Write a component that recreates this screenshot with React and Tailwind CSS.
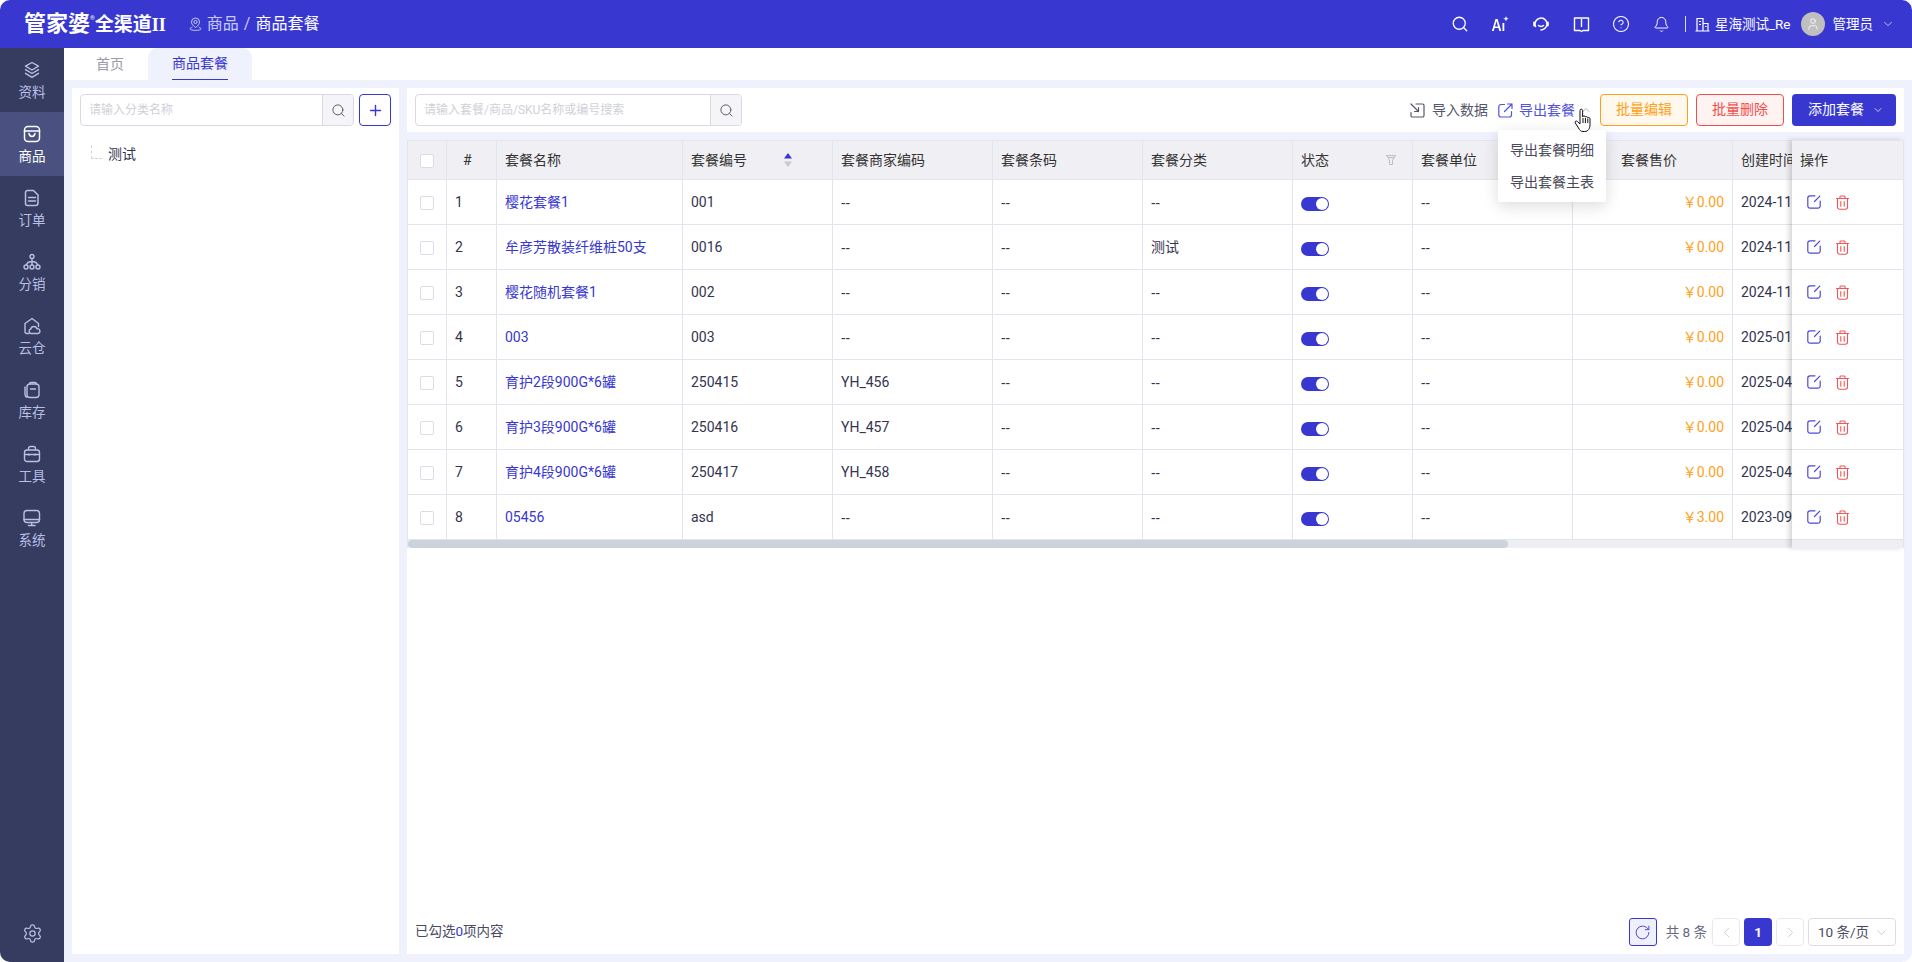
import { Search, Plus, ChevronDown, ChevronUp, ChevronLeft, ChevronRight, RotateCw, Settings, CircleHelp, Bell, User } from 'lucide-react'

const FONT = 'font-["Roboto","Noto_Sans_CJK_SC",sans-serif]'

const ROWS = [
  { name: '樱花套餐1', code: '001', merchant: '--', category: '--', price: '0.00', date: '2024-11-15 10:20' },
  { name: '牟彦芳散装纤维桩50支', code: '0016', merchant: '--', category: '测试', price: '0.00', date: '2024-11-18 09:12' },
  { name: '樱花随机套餐1', code: '002', merchant: '--', category: '--', price: '0.00', date: '2024-11-21 16:45' },
  { name: '003', code: '003', merchant: '--', category: '--', price: '0.00', date: '2025-01-06 11:30' },
  { name: '育护2段900G*6罐', code: '250415', merchant: 'YH_456', category: '--', price: '0.00', date: '2025-04-15 14:02' },
  { name: '育护3段900G*6罐', code: '250416', merchant: 'YH_457', category: '--', price: '0.00', date: '2025-04-15 14:03' },
  { name: '育护4段900G*6罐', code: '250417', merchant: 'YH_458', category: '--', price: '0.00', date: '2025-04-15 14:04' },
  { name: '05456', code: 'asd', merchant: '--', category: '--', price: '3.00', date: '2023-09-12 08:50' },
]

function StackIcon() {
  return (
    <svg className="w-[18px] h-[18px]" viewBox="0 0 18 18" fill="none" stroke="currentColor" strokeWidth="1.4" strokeLinejoin="round">
      <path d="M9 1.500l6.500 3.700L9 9 2.500 5.200z" />
      <path d="M2.500 8.700L9 12.500l6.500-3.800M2.500 12.300L9 16.300l6.500-4" strokeLinecap="round" />
    </svg>
  )
}

function BoxIcon() {
  return (
    <svg className="w-[18px] h-[18px]" viewBox="0 0 18 18" fill="none" stroke="currentColor" strokeWidth="1.5">
      <rect x="1.500" y="1.500" width="15" height="15" rx="3.500" />
      <path d="M1.500 6h15M6 8.500c.5 2.200 1.700 3 3 3s2.500-.8 3-3" strokeLinecap="round" />
    </svg>
  )
}

function OrderIcon() {
  return (
    <svg className="w-[18px] h-[18px]" viewBox="0 0 18 18" fill="none" stroke="currentColor" strokeWidth="1.5">
      <path d="M4.500 1.500h6L15 6v8a2.500 2.500 0 0 1-2.500 2.500h-8A2 2 0 0 1 2.500 14.500V3.500a2 2 0 0 1 2-2z" strokeLinejoin="round" />
      <path d="M5.500 8.500h7M5.500 12h7" strokeLinecap="round" />
    </svg>
  )
}

function TreeIcon() {
  return (
    <svg className="w-[18px] h-[18px]" viewBox="0 0 18 18" fill="none" stroke="currentColor" strokeWidth="1.400">
      <circle cx="9" cy="3.500" r="2" />
      <circle cx="3" cy="14" r="2" />
      <circle cx="9" cy="14" r="2" />
      <circle cx="15" cy="14" r="2" />
      <path d="M9 5.500V12M3.500 12c.5-2.500 2-3.500 5.500-3.500s5 1 5.500 3.500" />
    </svg>
  )
}

function CloudHouseIcon() {
  return (
    <svg className="w-[18px] h-[18px]" viewBox="0 0 18 18" fill="none" stroke="currentColor" strokeWidth="1.400">
      <path d="M6 16.500H4A2 2 0 0 1 2 14.500V6.500L9 1.500l6.500 5v3" strokeLinecap="round" strokeLinejoin="round" />
      <path d="M8 16.500a2.300 2.300 0 0 1-.2-4.500 3.200 3.200 0 0 1 6.200-.2 2.400 2.400 0 0 1 1 4.700z" strokeLinejoin="round" />
    </svg>
  )
}

function StockIcon() {
  return (
    <svg className="w-[18px] h-[18px]" viewBox="0 0 18 18" fill="none" stroke="currentColor" strokeWidth="1.400">
      <rect x="4" y="3" width="12" height="13.500" rx="3" />
      <path d="M2 6v7.500a3 3 0 0 0 2 2.800M6.500 3c0-1 .7-1.500 1.500-1.500h4c.8 0 1.500.5 1.500 1.500M7.500 8h5" strokeLinecap="round" />
    </svg>
  )
}

function ToolboxIcon() {
  return (
    <svg className="w-[18px] h-[18px]" viewBox="0 0 18 18" fill="none" stroke="currentColor" strokeWidth="1.400">
      <rect x="1.500" y="5" width="15" height="11.500" rx="2.500" />
      <path d="M5.500 5V3.500a2 2 0 0 1 2-2h3a2 2 0 0 1 2 2V5M1.500 9.500h15M6 8.500v2.200M12 8.500v2.200" />
    </svg>
  )
}

function MonitorIcon() {
  return (
    <svg className="w-[18px] h-[18px]" viewBox="0 0 18 18" fill="none" stroke="currentColor" strokeWidth="1.400">
      <rect x="1" y="1.500" width="15.500" height="12" rx="3" />
      <path d="M1 10.500h15.500M8.700 13.500v3M5.500 16.500h6.500" strokeLinecap="round" />
    </svg>
  )
}

function PinIcon() {
  return (
    <svg className="w-[13px] h-[14px]" viewBox="0 0 13 14" fill="none" stroke="#c5c8f5" strokeWidth="1">
      <path d="M6.500 10.500C4.300 8.800 2.500 7.300 2.500 5a4 4 0 0 1 8 0c0 2.300-1.800 3.800-4 5.500z" />
      <circle cx="6.500" cy="5" r="1.600" />
      <path d="M3 10.300c-1.200.4-2 1-2 1.600 0 .8 2.400 1.500 5.500 1.500S12 12.700 12 11.900c0-.6-.8-1.200-2-1.600" strokeLinecap="round" />
    </svg>
  )
}

function AiIcon() {
  return (
    <svg className="w-[18px] h-[18px]" viewBox="0 0 18 18" fill="currentColor">
      <path d="M4.500 4h2.100l3.700 12H8.300l-.8-2.900H3.600L2.800 16H.9zm-.5 7.400h3L5.500 6.300zM11.500 8h1.800v8h-1.800z" />
      <path d="M15 1l.7 2 2 .7-2 .7-.7 2-.7-2-2-.7 2-.7z" />
    </svg>
  )
}

function HeadsetIcon() {
  return (
    <svg className="w-[16px] h-[16px]" viewBox="0 0 16 16" fill="none" stroke="currentColor" strokeWidth="1.500">
      <path d="M2.500 10.500A6 6 0 1 1 14 8c0 3-2.500 5.800-6 6" strokeLinecap="round" />
      <path d="M1.200 6.500v3M14.800 6.500v3" strokeLinecap="round" strokeWidth="2" />
      <path d="M5.500 9.500c1.200 1.200 3.800 1.200 5 0" strokeLinecap="round" />
    </svg>
  )
}

function BookIcon() {
  return (
    <svg className="w-[17px] h-[17px]" viewBox="0 0 17 17" fill="none" stroke="currentColor" strokeWidth="1.400">
      <path d="M1.500 2h14v12.500h-5.500L8.500 15.500 7 14.500H1.500z" strokeLinejoin="round" />
      <path d="M8.500 3v8" />
    </svg>
  )
}

function BuildingIcon() {
  return (
    <svg className="w-[15px] h-[15px]" viewBox="0 0 15 15" fill="none" stroke="currentColor" strokeWidth="1.200">
      <path d="M2 14V1.500h6V14M8 6.500h5V14M.5 14h14M4 4.500h2M4 7.500h2M10 9.500h1.500" />
    </svg>
  )
}

function ImportIcon() {
  return (
    <svg className="w-[15px] h-[15px]" viewBox="0 0 15 15" fill="none" stroke="currentColor" strokeWidth="1.200">
      <path d="M6 1h6.500A1.500 1.500 0 0 1 14 2.500v10a1.500 1.500 0 0 1-1.500 1.500h-10A1.500 1.500 0 0 1 1 12.500V9.500M1 1l7.500 7.500M8.500 4.500v4H4.500" strokeLinecap="round" strokeLinejoin="round" />
    </svg>
  )
}

function ExportIcon() {
  return (
    <svg className="w-[15px] h-[15px]" viewBox="0 0 15 15" fill="none" stroke="currentColor" strokeWidth="1.200">
      <path d="M6.500 1.500H3A2.200 2.200 0 0 0 .8 3.700v8.100A2.200 2.200 0 0 0 3 14h8.300a2.200 2.200 0 0 0 2.200-2.200V8.500M6.500 8.500L14 1M9.500 1H14v4.500" strokeLinecap="round" strokeLinejoin="round" />
    </svg>
  )
}

function EditIcon() {
  return (
    <svg className="w-[14px] h-[14px]" viewBox="0 0 14 14" fill="none" stroke="currentColor" strokeWidth="1.200">
      <path d="M8 .8H3A2.200 2.200 0 0 0 .8 3v8A2.200 2.200 0 0 0 3 13.200h8a2.200 2.200 0 0 0 2.200-2.200V6M7.500 6.500L12.800 1.200" strokeLinecap="round" />
    </svg>
  )
}

function TrashIcon() {
  return (
    <svg className="w-[13px] h-[15px]" viewBox="0 0 13 15" fill="none" stroke="currentColor" strokeWidth="1.100">
      <path d="M.5 3.500h12M4 3.500V1.800c0-.5.4-.8.800-.8h3.400c.4 0 .8.300.8.800v1.700M1.500 3.500V12a2.200 2.200 0 0 0 2.200 2.200h5.600a2.200 2.200 0 0 0 2.200-2.200V3.500M4.800 6.500v4.800M8.200 6.500v4.800" strokeLinecap="round" />
    </svg>
  )
}

function SortIcon() {
  return (
    <svg className="w-[8px] h-[14px]" viewBox="0 0 8 14">
      <path d="M4 0l4 5.500H0z" fill="#3838d0" />
      <path d="M4 14l4-5.500H0z" fill="#c9c9d2" />
    </svg>
  )
}

function FilterIcon() {
  return (
    <svg className="w-[10px] h-[10px]" viewBox="0 0 10 10" fill="none" stroke="#b5b5bf" strokeWidth="0.9">
      <path d="M.5.500h9L6.500 5v4.500h-3V5zM2 2.500h6" />
    </svg>
  )
}

function HandCursor() {
  return (
    <svg className="absolute left-[1574px] top-[108px] w-[19px] h-[25px] z-30" viewBox="0 0 19 25" fill="#fff" stroke="#111" strokeWidth="1" strokeLinejoin="round">
      <path d="M6 2.500c0-1.800 2.600-1.800 2.600 0V9l.4-.6c.4-.8 2.300-.6 2.400.6.500-.7 2.200-.5 2.400.7.700-.5 2.200-.2 2.200 1.100v6c0 3.500-1.800 6.700-5.200 6.700H9c-2.300 0-3.400-1.500-4.500-3.500L1.300 15c-.9-1.500 1-2.800 2.100-1.500L6 16z" />
      <path d="M9 10v5M11.400 10v5M13.800 10.500V15" fill="none" />
    </svg>
  )
}

function Dash({ value }) {
  return value === '--' ? <span className='font-["Noto_Sans"]'>--</span> : value
}

const NAV = [
  { label: '资料', icon: <StackIcon /> },
  { label: '商品', icon: <BoxIcon />, active: true },
  { label: '订单', icon: <OrderIcon /> },
  { label: '分销', icon: <TreeIcon /> },
  { label: '云仓', icon: <CloudHouseIcon /> },
  { label: '库存', icon: <StockIcon /> },
  { label: '工具', icon: <ToolboxIcon /> },
  { label: '系统', icon: <MonitorIcon /> },
]

function Header() {
  return (
    <header className="h-12 shrink-0 bg-[#3838d0] text-white flex items-center">
      <div className="ml-6 flex items-baseline whitespace-nowrap">
        <span className="text-[22px] font-bold leading-none">管家婆</span>
        <span className="text-[6px] self-start">®</span>
        <span className="text-[19px] font-bold leading-none">全渠道</span>
        <span className='text-[18px] font-bold leading-none font-["Liberation_Serif",serif]'>II</span>
      </div>
      <div className="ml-[23px] flex items-center text-[16px] whitespace-nowrap">
        <PinIcon />
        <span className="ml-[5px] text-[#c9cbf6]">商品</span>
        <span className="mx-[5px] text-[#c9cbf6]">/</span>
        <span>商品套餐</span>
      </div>
      <div className="ml-auto flex items-center">
        <Search size={18} strokeWidth={1.7} className="mr-[22px]" />
        <span className="mr-[24px]"><AiIcon /></span>
        <span className="mr-[24px]"><HeadsetIcon /></span>
        <span className="mr-[22px]"><BookIcon /></span>
        <CircleHelp size={18} strokeWidth={1.4} className="mr-[23px]" />
        <Bell size={17} strokeWidth={1.4} className="mr-[15px]" />
        <span className="w-px h-[16px] bg-[#d8d9f8] mr-[9px]" />
        <BuildingIcon />
        <span className="ml-[5px] text-[13.500px] whitespace-nowrap">星海测试_Re</span>
        <span className="ml-[10px] w-6 h-6 rounded-full bg-[#bfbfbf] flex items-center justify-center">
          <User size={14} strokeWidth={1.4} />
        </span>
        <span className="ml-[8px] text-[13.500px] whitespace-nowrap">管理员</span>
        <ChevronDown size={14} strokeWidth={1.4} className="ml-[8px] mr-[17px] text-[#d8d9f8]" />
      </div>
    </header>
  )
}

function Sidebar() {
  return (
    <aside className="w-16 shrink-0 bg-[#363c60] flex flex-col text-[#b9bee6]">
      {NAV.map((item) => (
        <div key={item.label} className={`h-16 flex flex-col items-center pt-[13px] ${item.active ? 'bg-[#4a5180] text-white' : ''}`}>
          {item.icon}
          <span className="mt-[3px] text-[13.500px] leading-[20px]">{item.label}</span>
        </div>
      ))}
      <div className="mt-auto mb-[18px] flex justify-center">
        <Settings size={21} strokeWidth={1.4} />
      </div>
    </aside>
  )
}

function SearchBox({ width, placeholder }) {
  return (
    <div className={`h-8 flex border border-[#d9d9e3] rounded-[4px] overflow-hidden ${width}`}>
      <div className="flex-1 pl-[8px] text-[12px] leading-[31px] text-[#d0d0d8] whitespace-nowrap">{placeholder}</div>
      <div className="w-[31px] bg-[#f5f5f8] border-l border-[#d9d9e3] flex items-center justify-center text-[#55566a]">
        <Search size={15} strokeWidth={1.5} />
      </div>
    </div>
  )
}

function Cell({ width, className = '', children }) {
  return <div className={`${width} shrink-0 h-full border-r border-[#e4e4ec] flex items-center pl-2 ${className}`}>{children}</div>
}

function Checkbox() {
  return <span className="mt-[2px] w-[14px] h-[14px] rounded-[2px] border border-[#dcdce4] bg-white" />
}

function Table() {
  return (
    <div className="relative flex text-[14px] text-[#33344f]">
      <div className="flex-1 min-w-0 overflow-hidden border-l border-t border-[#e4e4ec]">
        <div className="w-[1500px]">
          <div className="h-[39px] flex bg-[#f0f0f4] border-b border-[#e4e4ec] text-[#333]">
            <Cell width="w-[39px]" className="justify-center !pl-0"><Checkbox /></Cell>
            <Cell width="w-[50px]" className="!pl-[16px]">#</Cell>
            <Cell width="w-[186px]">套餐名称</Cell>
            <Cell width="w-[150px]">套餐编号<span className="ml-[37px] flex"><SortIcon /></span></Cell>
            <Cell width="w-[160px]">套餐商家编码</Cell>
            <Cell width="w-[150px]">套餐条码</Cell>
            <Cell width="w-[150px]">套餐分类</Cell>
            <Cell width="w-[120px]" className="justify-between pr-[16px]">状态<FilterIcon /></Cell>
            <Cell width="w-[160px]">套餐单位</Cell>
            <Cell width="w-[160px]" className="!pl-[48px]">套餐售价</Cell>
            <Cell width="w-[160px]">创建时间</Cell>
          </div>
          {ROWS.map((row, i) => (
            <div key={row.code} className="h-[45px] flex bg-white border-b border-[#e4e4ec]">
              <Cell width="w-[39px]" className="justify-center !pl-0"><Checkbox /></Cell>
              <Cell width="w-[50px]">{i + 1}</Cell>
              <Cell width="w-[186px]"><span className="text-[#3838d0]">{row.name}</span></Cell>
              <Cell width="w-[150px]">{row.code}</Cell>
              <Cell width="w-[160px]"><Dash value={row.merchant} /></Cell>
              <Cell width="w-[150px]"><Dash value="--" /></Cell>
              <Cell width="w-[150px]"><Dash value={row.category} /></Cell>
              <Cell width="w-[120px]">
                <span className="mt-[3px] w-[28px] h-[14px] rounded-full bg-[#3838d0] flex items-center justify-end pr-[1px]">
                  <span className="w-3 h-3 rounded-full bg-white" />
                </span>
              </Cell>
              <Cell width="w-[160px]"><Dash value="--" /></Cell>
              <Cell width="w-[160px]" className="justify-end pr-2"><span className="text-[#ff9f1a]">￥{row.price}</span></Cell>
              <Cell width="w-[160px]"><span className="whitespace-nowrap">{row.date}</span></Cell>
            </div>
          ))}
        </div>
        <div className="h-[8px] bg-[#eeeff3]">
          <div className="h-full w-[1100px] rounded-full bg-[#cdd3da]" />
        </div>
      </div>
      <div className="w-[112px] shrink-0 border-t border-r border-[#e4e4ec] bg-white shadow-[-3px_0_5px_rgba(0,0,0,0.16)] z-10">
        <div className="h-[39px] bg-[#f0f0f4] border-b border-[#e4e4ec] flex items-center pl-2 text-[#333]">操作</div>
        {ROWS.map((row) => (
          <div key={row.code} className="h-[45px] border-b border-[#e4e4ec] flex items-center pl-[15px] gap-[15px]">
            <span className="text-[#4a4ad6]"><EditIcon /></span>
            <span className="text-[#f25555]"><TrashIcon /></span>
          </div>
        ))}
        <div className="h-[8px] bg-[#eeeff3]" />
      </div>
    </div>
  )
}

function Toolbar() {
  return (
    <div className="h-[44px] shrink-0 bg-white flex items-center pl-2 pr-2 text-[14px]">
      <SearchBox width="w-[327px]" placeholder="请输入套餐/商品/SKU名称或编号搜索" />
      <div className="ml-auto flex items-center text-[#55566a]">
        <ImportIcon />
        <span className="ml-[7px]">导入数据</span>
      </div>
      <div className="ml-[10px] flex items-center text-[#5353d8]">
        <ExportIcon />
        <span className="ml-[6px]">导出套餐</span>
        <ChevronUp size={12} strokeWidth={1.3} className="ml-[5px] text-[#8a8aa0]" />
      </div>
      <button className="ml-[8px] w-[88px] h-8 pb-[1px] rounded-[4px] border border-[#ff9f1a] bg-[#fff8ec] text-[#ff9f1a]">批量编辑</button>
      <button className="ml-2 w-[88px] h-8 pb-[1px] rounded-[4px] border border-[#f24d4d] bg-[#fff3f1] text-[#f24d4d]">批量删除</button>
      <button className="ml-2 w-[104px] h-8 pb-[1px] pl-[4px] rounded-[4px] bg-[#3838d0] text-white flex items-center justify-center gap-[8px]">
        添加套餐<ChevronDown size={12} strokeWidth={1.4} />
      </button>
    </div>
  )
}

function Pagination() {
  return (
    <div className="h-[44px] shrink-0 mt-auto bg-white flex items-center pl-2 pr-2 text-[13.500px] text-[#4a4b63]">
      <span className="pb-[1px]">已勾选<span className="text-[#3838d0]">0</span>项内容</span>
      <span className="ml-auto w-[28px] h-[28px] rounded-[3px] border border-[#3838d0] bg-[#eff0fc] text-[#4a4ad6] flex items-center justify-center">
        <RotateCw size={17} strokeWidth={1.4} />
      </span>
      <span className="ml-[9px] text-[#66677d]">共 8 条</span>
      <span className="ml-[5px] w-[28px] h-[28px] rounded-[4px] border border-[#e8e8ee] text-[#c4c4cc] flex items-center justify-center">
        <ChevronLeft size={17} strokeWidth={1.2} />
      </span>
      <span className="ml-[4px] w-[28px] h-[28px] rounded-[4px] bg-[#3838d0] text-white font-bold flex items-center justify-center">1</span>
      <span className="ml-[4px] w-[28px] h-[28px] rounded-[4px] border border-[#e8e8ee] text-[#c4c4cc] flex items-center justify-center">
        <ChevronRight size={17} strokeWidth={1.2} />
      </span>
      <span className="ml-[4px] w-[88px] h-[28px] rounded-[4px] border border-[#dcdce4] flex items-center pl-[9px] whitespace-nowrap">
        10 条/页
        <ChevronDown size={15} strokeWidth={1.1} className="ml-[5px] text-[#b5b5bf]" />
      </span>
    </div>
  )
}

export default function App() {
  return (
    <div className={`relative w-[1912px] h-[962px] overflow-hidden rounded-[10px] flex flex-col bg-[#eff1fd] ${FONT}`}>
      <Header />
      <div className="flex-1 min-h-0 flex">
        <Sidebar />
        <main className="flex-1 min-w-0 flex flex-col">
          <div className="h-8 shrink-0 bg-white flex items-stretch text-[14px]">
            <div className="w-[84px] pl-[8px] flex items-center justify-center text-[#9a9aa8]">首页</div>
            <div className="w-[104px] bg-[#eff1fd] rounded-t-[10px] flex items-center justify-center text-[#3838d0]">
              <span className="h-full flex items-center border-b border-[#3838d0]">商品套餐</span>
            </div>
          </div>
          <div className="flex-1 min-h-0 flex gap-2 p-2">
            <section className="w-[327px] shrink-0 bg-white pt-[6px] px-2">
              <div className="flex gap-[5px]">
                <SearchBox width="w-[274px]" placeholder="请输入分类名称" />
                <span className="w-8 h-8 rounded-[4px] border border-[#3838d0] text-[#3838d0] flex items-center justify-center">
                  <Plus size={17} strokeWidth={2} />
                </span>
              </div>
              <div className="mt-[18px] ml-[11px] flex items-center">
                <span className="w-[11px] h-[14px] -mt-[6px] border-l border-b border-dashed border-[#d5d5dd]" />
                <span className="ml-[6px] text-[14px] text-[#33344f]">测试</span>
              </div>
            </section>
            <section className="flex-1 min-w-0 flex flex-col gap-2">
              <Toolbar />
              <div className="flex-1 min-h-0 flex flex-col bg-white">
                <Table />
                <Pagination />
              </div>
            </section>
          </div>
        </main>
      </div>
      <div className="absolute left-[1498px] top-[130px] w-[108px] h-[72px] z-20 bg-white rounded-[3px] shadow-[0_4px_16px_rgba(0,0,0,0.14)] flex flex-col justify-center items-center text-[14px] text-[#4a4b5a]">
        <span className="h-8 leading-8">导出套餐明细</span>
        <span className="h-8 leading-8">导出套餐主表</span>
      </div>
      <HandCursor />
    </div>
  )
}
